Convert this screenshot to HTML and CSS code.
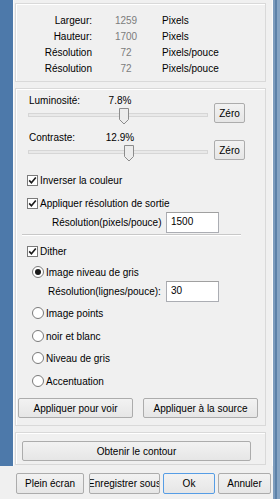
FILE: index.html
```html
<!DOCTYPE html>
<html lang="fr">
<head>
    <meta charset="UTF-8">
    <meta name="viewport" content="width=device-width, initial-scale=1.0">
    <title>Réglages de l'image</title>
    <link rel="stylesheet" href="styles.css">
</head>
<body>
    <div class="window">
        <div class="client">
            <div class="upper">
                <div class="backdrop"></div>
                <div class="dialog">
                    <!-- infos sur l'image -->
                    <div class="panel info">
                        <div class="info-row"><span class="info-label">Largeur:</span><span class="info-value">1259</span><span class="info-unit">Pixels</span></div>
                        <div class="info-row"><span class="info-label">Hauteur:</span><span class="info-value">1700</span><span class="info-unit">Pixels</span></div>
                        <div class="info-row"><span class="info-label">Résolution</span><span class="info-value">72</span><span class="info-unit">Pixels/pouce</span></div>
                        <div class="info-row"><span class="info-label">Résolution</span><span class="info-value">72</span><span class="info-unit">Pixels/pouce</span></div>
                    </div>

                    <!-- réglages -->
                    <div class="panel settings">
                        <div class="slider-row mt-4">
                            <div class="slider-body">
                                <div class="slider-head"><span class="slider-label">Luminosité:</span><span class="slider-value">7.8%</span></div>
                                <div class="slider-track">
                                    <span class="thumb" style="left: 91px;">
                                        <svg width="10" height="17" viewBox="0 0 10 17"><path d="M0.5 0.5 H9.5 V11.5 L5 16 L0.5 11.5 Z" fill="#ececec" stroke="#8c8c8c"/></svg>
                                    </span>
                                </div>
                            </div>
                            <button class="btn zero">Zéro</button>
                        </div>

                        <div class="slider-row mt-5">
                            <div class="slider-body">
                                <div class="slider-head"><span class="slider-label">Contraste:</span><span class="slider-value">12.9%</span></div>
                                <div class="slider-track">
                                    <span class="thumb" style="left: 96px;">
                                        <svg width="10" height="17" viewBox="0 0 10 17"><path d="M0.5 0.5 H9.5 V11.5 L5 16 L0.5 11.5 Z" fill="#ececec" stroke="#8c8c8c"/></svg>
                                    </span>
                                </div>
                            </div>
                            <button class="btn zero">Zéro</button>
                        </div>

                        <label class="check-row mt-10">
                            <span class="checkbox"><svg width="9" height="9" viewBox="0 0 9 9"><path d="M1.2 4.4 L3.4 6.8 L7.8 1.4" fill="none" stroke="#1a1a1a" stroke-width="1.6"/></svg></span>
                            Inverser la couleur
                        </label>

                        <label class="check-row mt-7">
                            <span class="checkbox"><svg width="9" height="9" viewBox="0 0 9 9"><path d="M1.2 4.4 L3.4 6.8 L7.8 1.4" fill="none" stroke="#1a1a1a" stroke-width="1.6"/></svg></span>
                            Appliquer résolution de sortie
                        </label>

                        <div class="field-row pixels mt-1">
                            <span>Résolution(pixels/pouce)</span>
                            <input type="text" class="field" value="1500">
                        </div>

                        <div class="separator"></div>

                        <label class="check-row mt-7">
                            <span class="checkbox"><svg width="9" height="9" viewBox="0 0 9 9"><path d="M1.2 4.4 L3.4 6.8 L7.8 1.4" fill="none" stroke="#1a1a1a" stroke-width="1.6"/></svg></span>
                            Dither
                        </label>

                        <label class="radio-row mt-5"><span class="radio checked"></span>Image niveau de gris</label>

                        <div class="field-row lignes mt-1">
                            <span>Résolution(lignes/pouce):</span>
                            <input type="text" class="field" value="30">
                        </div>

                        <label class="radio-row mt-3"><span class="radio"></span>Image points</label>
                        <label class="radio-row mt-7"><span class="radio"></span>noir et blanc</label>
                        <label class="radio-row mt-6"><span class="radio"></span>Niveau de gris</label>
                        <label class="radio-row mt-7"><span class="radio"></span>Accentuation</label>

                        <div class="apply-row">
                            <button class="btn apply">Appliquer pour voir</button>
                            <button class="btn apply">Appliquer à la source</button>
                        </div>
                    </div>

                    <div class="panel contour">
                        <button class="btn contour-btn">Obtenir le contour</button>
                    </div>
                </div>
            </div>

            <div class="footer">
                <button class="btn foot plein"><span>Plein écran</span></button>
                <button class="btn foot save"><span>Enregistrer sous</span></button>
                <button class="btn foot ok"><span>Ok</span></button>
                <button class="btn foot cancel"><span>Annuler</span></button>
            </div>
        </div>
        <div class="frame"></div>
    </div>
</body>
</html>
```

FILE: styles.css
```css
body {
    margin: 0;
    background-color: #f0f0f0;
    font-family: "Liberation Sans", Arial, sans-serif;
    font-size: 10px;
    color: #000;
}
.window {
    display: flex;
    width: 280px;
    height: 499px;
    overflow: hidden;
}
.client {
    flex: 1;
    display: flex;
    flex-direction: column;
}
.upper {
    display: flex;
    height: 466px;
}
.backdrop {
    width: 13px;
    background-color: #4d79aa;
}
.dialog {
    flex: 1;
    border-left: 1px solid #fbfbfb;
    border-right: 1px solid #fbfbfb;
    padding: 3px 6px 0 1px;
}
.frame {
    width: 7px;
    background: linear-gradient(to right, #7d9cbd 0 2px, #5d82a9 2px 4px, #86a4c3 4px);
}
.panel {
    border: 1px solid #d9d9d9;
    box-shadow: inset 1px 1px 0 #fff;
}

/* infos */
.info {
    padding: 9px 0 4px;
}
.info-row {
    display: grid;
    grid-template-columns: 76px 68px 1fr;
    line-height: 16px;
}
.info-label {
    text-align: right;
}
.info-value {
    text-align: center;
    color: #7c7c7c;
}
.info-unit {
    padding-left: 2px;
}

/* réglages */
.settings {
    margin-top: 6px;
    padding-bottom: 7px;
    display: flex;
    flex-direction: column;
}
.mt-1 { margin-top: 1px; }
.mt-3 { margin-top: 3px; }
.mt-4 { margin-top: 4px; }
.mt-5 { margin-top: 5px; }
.mt-6 { margin-top: 6px; }
.mt-7 { margin-top: 7px; }
.mt-10 { margin-top: 10px; }

.slider-row {
    display: flex;
    padding-left: 12px;
}
.slider-body {
    width: 180px;
}
.slider-head {
    display: flex;
    line-height: 15px;
}
.slider-label {
    width: 72px;
    padding-left: 1px;
    box-sizing: border-box;
}
.slider-value {
    width: 40px;
    text-align: center;
}
.slider-track {
    position: relative;
    height: 17px;
}
.slider-track::before {
    content: "";
    position: absolute;
    left: 0;
    right: 0;
    top: 5px;
    height: 2px;
    border: 1px solid #d6d6d6;
    background-color: #e9e9e9;
}
.thumb {
    position: absolute;
    top: 0;
    height: 17px;
}
.thumb svg {
    display: block;
}

.btn {
    font: inherit;
    color: #000;
    height: 20px;
    padding: 0;
    border: 1px solid #acacac;
    border-radius: 2px;
    background: linear-gradient(#f2f2f2, #e6e6e6);
    box-sizing: border-box;
}
.zero {
    width: 31px;
    margin: 10px 0 0 6px;
}

.check-row,
.radio-row {
    display: flex;
    align-items: center;
    height: 16px;
}
.check-row {
    padding-left: 11px;
}
.checkbox {
    width: 11px;
    height: 11px;
    border: 1px solid #7a7a7a;
    background-color: #fff;
    box-sizing: border-box;
    display: flex;
    align-items: center;
    justify-content: center;
    margin-right: 2px;
}
.checkbox svg {
    display: block;
}
.radio-row {
    padding-left: 16px;
}
.radio {
    width: 12px;
    height: 12px;
    border: 1px solid #7a7a7a;
    border-radius: 50%;
    background-color: #fff;
    box-sizing: border-box;
    margin-right: 2px;
    display: flex;
    align-items: center;
    justify-content: center;
}
.radio.checked::after {
    content: "";
    width: 6px;
    height: 6px;
    border-radius: 50%;
    background-color: #1a1a1a;
}

.field-row {
    display: grid;
    align-items: center;
}
.field-row.pixels {
    grid-template-columns: 114px 53px;
    padding-left: 36px;
}
.field-row.lignes {
    grid-template-columns: 118px 53px;
    padding-left: 32px;
}
.field {
    font: inherit;
    height: 21px;
    width: 53px;
    padding: 0 0 3px 4px;
    border: 1px solid #abadb3;
    border-top-color: #a0a0a0;
    box-sizing: border-box;
    background-color: #fff;
}

.separator {
    margin: 1px 24px 0 6px;
    height: 1px;
    background-color: #c8c8c8;
    border-bottom: 1px solid #fff;
}

.apply-row {
    display: flex;
    gap: 10px;
    margin: 9px 0 0 2px;
}
.apply {
    width: 115px;
}

.contour {
    margin-top: 6px;
    padding: 8px 0 3px;
}
.contour-btn {
    width: 229px;
    margin-left: 6px;
}

/* boutons du bas */
.footer {
    display: flex;
    gap: 3px;
    padding: 7px 0 0 16px;
}
.foot {
    height: 21px;
    display: flex;
    align-items: center;
    justify-content: center;
    overflow: hidden;
    white-space: nowrap;
}
.foot span {
    flex-shrink: 0;
}
.plein {
    width: 68px;
    margin-right: 2px;
}
.save {
    width: 71px;
}
.ok {
    width: 52px;
    border-color: #569de5;
}
.cancel {
    width: 53px;
}
```
